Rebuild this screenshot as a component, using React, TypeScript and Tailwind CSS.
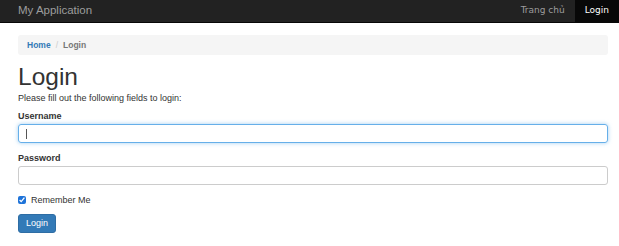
import React from "react";

const App = () => {
  return (
    <div className="min-h-[246px] bg-white font-['Liberation_Sans',Arial,sans-serif] text-[#333]">
      <nav className="flex h-[23px] items-stretch justify-between bg-[#222] border-b border-[#080808]">
        <a href="#" className="flex items-center pl-[18px] text-[11.5px] text-[#9d9d9d] leading-none">
          My Application
        </a>
        <div className="flex items-stretch font-['DejaVu_Sans',sans-serif] text-[9px]">
          <a href="#" className="flex items-center px-[10px] text-[#9d9d9d]">
            Trang chủ
          </a>
          <a href="#" className="flex items-center bg-[#080808] px-[10px] text-white">
            Login
          </a>
        </div>
      </nav>

      <div className="pl-[18px] pr-[11px] pt-[12px]">
        <div className="flex h-[20px] items-center rounded-[3px] bg-[#f5f5f5] px-[9px] text-[8.5px] font-bold">
          <a href="#" className="text-[#337ab7]">Home</a>
          <span className="px-[5px] font-normal text-[#ccc]">/</span>
          <span className="text-[#777]">Login</span>
        </div>

        <h1 className="mt-[9px] text-[24.5px] leading-[26px] text-[#333]">Login</h1>
        <p className="mt-[2px] text-[9px] leading-[12px]">Please fill out the following fields to login:</p>

        <form className="mt-[6px]">
          <label className="block text-[9px] font-bold leading-[12px]">Username</label>
          <div className="mt-[2px] flex h-[19px] items-center rounded-[3px] border border-[#66afe9] px-[7px] shadow-[0_0_4px_rgba(102,175,233,0.6)]">
            <span className="h-[10px] w-px bg-[#555]" />
          </div>

          <label className="mt-[9px] block text-[9px] font-bold leading-[12px]">Password</label>
          <div className="mt-[2px] h-[19px] rounded-[3px] border border-[#ccc]" />

          <label className="mt-[9px] flex items-center gap-[5px] text-[9px] leading-[12px]">
            <input type="checkbox" defaultChecked className="m-0 h-[8px] w-[8px] accent-[#1e73d9]" />
            Remember Me
          </label>

          <button
            type="button"
            className="mt-[8px] flex h-[19px] w-[38px] items-center justify-center rounded-[3px] border border-[#2e6da4] bg-[#337ab7] text-[9px] text-white"
          >
            Login
          </button>
        </form>
      </div>
    </div>
  );
};

export default App;
